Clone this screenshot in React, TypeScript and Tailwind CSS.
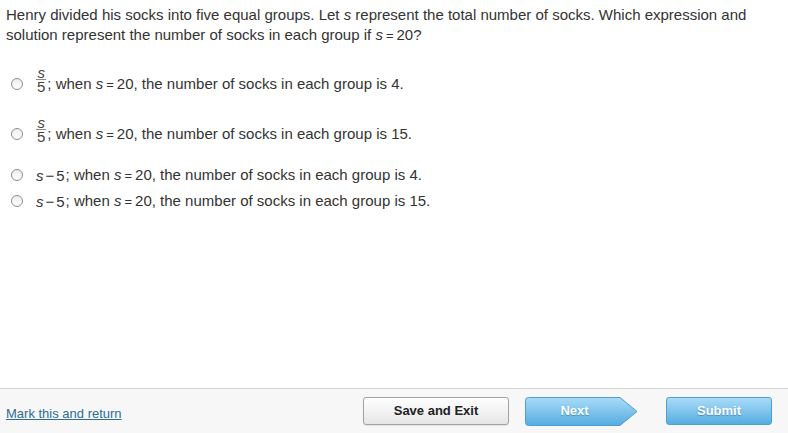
import React from 'react';

const font = { fontFamily: '"Liberation Sans", Arial, sans-serif' };

function Radio() {
    return (
        <span className="block w-[12px] h-[12px] rounded-full border border-[#8d8d8d] bg-gradient-to-b from-[#eeeeee] to-white shrink-0" />
    );
}

// s = 20 in the math font
function SEq() {
    return (
        <span className="text-[#333] whitespace-nowrap">
            <i>s</i>
            <span className="mx-[3px] text-[13px]">=</span>
            20
        </span>
    );
}

function Fraction() {
    return (
        <span className="flex flex-col items-center mr-[1px] text-[15px] text-[#444]">
            <i className="leading-[13px]">s</i>
            <span className="leading-[13px] border-t border-[#888] px-[1px]">5</span>
        </span>
    );
}

function Option({ frac, answer }: { frac: boolean; answer: string }) {
    return (
        <div className="flex items-end">
            <div className="w-[30px] pl-[5px] mb-[3px]">
                <Radio />
            </div>
            {frac ? (
                <Fraction />
            ) : (
                <span className="leading-[17px] text-[15px] mr-[1px] whitespace-nowrap">
                    <i>s</i>
                    <span className="mx-[2px]">−</span>5
                </span>
            )}
            <span className="leading-[17px] text-[15px] text-[#333]">
                ; when <SEq />, the number of socks in each group is {answer}.
            </span>
        </div>
    );
}

export default function App() {
    return (
        <div className="h-[433px] w-full flex flex-col bg-white text-[#333]" style={font}>
            <div className="flex-1 px-[6px] pt-[5px]">
                <p className="text-[15px] leading-[20px]">
                    Henry divided his socks into five equal groups. Let <i>s</i> represent the total number of socks. Which expression and solution represent the number of socks in each group if <SEq />?
                </p>

                <div className="mt-[20px]">
                    <Option frac answer="4" />
                </div>
                <div className="mt-[23px]">
                    <Option frac answer="15" />
                </div>
                <div className="mt-[23px]">
                    <Option frac={false} answer="4" />
                </div>
                <div className="mt-[8px]">
                    <Option frac={false} answer="15" />
                </div>
            </div>

            {/* footer */}
            <div className="h-[45px] border-t border-[#d6d6d6] bg-[#f7f7f7] flex items-center pl-[6px] pr-[16px]">
                <a href="#" className="text-[13px] text-[#2d6e93] underline mt-[5px]">
                    Mark this and return
                </a>
                <div className="ml-auto flex items-center">
                    <button className="w-[146px] h-[28px] rounded-[3px] border border-[#a3a3a3] bg-gradient-to-b from-white to-[#e6e6e6] text-[13px] font-bold text-[#222] shadow-[0_1px_1px_rgba(0,0,0,0.08)]">
                        Save and Exit
                    </button>
                    <button className="relative ml-[16px] w-[113px] h-[29px] text-[13px] font-bold text-white">
                        <svg className="absolute inset-0" width="113" height="29" viewBox="0 0 113 29">
                            <defs>
                                <linearGradient id="nx" x1="0" y1="0" x2="0" y2="1">
                                    <stop offset="0" stopColor="#a9dbf7" />
                                    <stop offset="1" stopColor="#55ade2" />
                                </linearGradient>
                            </defs>
                            <path d="M3.5 0.5 H95 L112 14.5 L95 28.5 H3.5 Q0.5 28.5 0.5 25.5 V3.5 Q0.5 0.5 3.5 0.5 Z" fill="url(#nx)" stroke="#4e9fcf" />
                        </svg>
                        <span className="relative pr-[14px] [text-shadow:0_1px_1px_rgba(0,60,110,0.4)]">Next</span>
                    </button>
                    <button className="ml-[28px] w-[106px] h-[28px] rounded-[3px] border border-[#4e9fcf] bg-gradient-to-b from-[#a9dbf7] to-[#55ade2] text-[13px] font-bold text-white [text-shadow:0_1px_1px_rgba(0,60,110,0.4)]">
                        Submit
                    </button>
                </div>
            </div>
        </div>
    );
}
